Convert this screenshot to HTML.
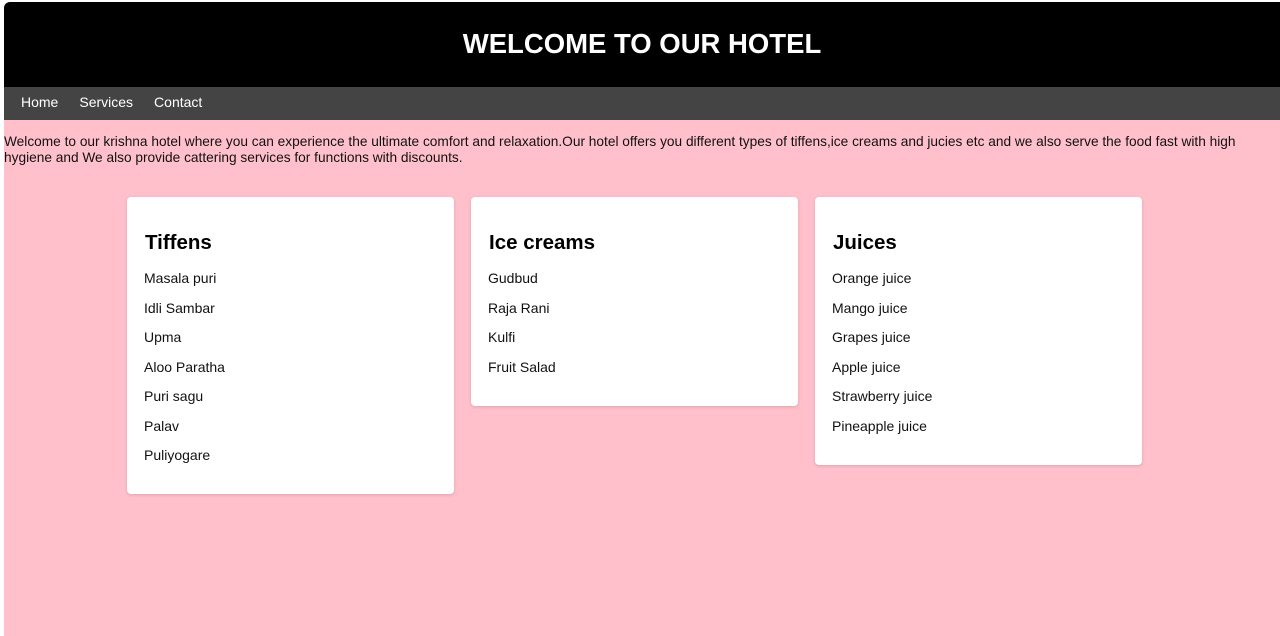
<!DOCTYPE html>
<html><head><style>
body{margin:0;background:#fff;font-family:"Liberation Sans",Arial,sans-serif;}
.wrap{position:absolute;left:4px;top:2px;right:0;height:634px;background:#ffc0cb;border-top-left-radius:6px;overflow:hidden}
.hd{background:#000;height:85px;color:#fff;text-align:center;font-weight:bold;font-size:27.5px;line-height:83px;}
.nav{background:#444;height:33px;line-height:31px;padding-left:17px}
.nav span{color:#fff;font-size:14px;margin-right:21px}
p.i{margin:14px 0 0 0;font-size:13.7px;line-height:16px;color:#111}
.card{position:absolute;top:195px;width:327px;background:#fff;border-radius:4px;box-shadow:0 1px 3px rgba(0,0,0,.15)}
.card h2{margin:34px 0 9px 18px;font-size:20.5px;line-height:24px}
.card div{margin-left:17px;font-size:14px;line-height:29.5px;color:#111}
</style></head><body>
<div class="wrap">
<div class="hd">WELCOME TO OUR HOTEL</div>
<div class="nav"><span>Home</span><span>Services</span><span>Contact</span></div>
<p class="i">Welcome to our krishna hotel where you can experience the ultimate comfort and relaxation.Our hotel offers you different types of tiffens,ice creams and jucies etc and we also serve the food fast with high hygiene and We also provide cattering services for functions with discounts.</p>
<div class="card" style="left:123px;height:297px"><h2>Tiffens</h2><div>Masala puri<br>Idli Sambar<br>Upma<br>Aloo Paratha<br>Puri sagu<br>Palav<br>Puliyogare</div></div>
<div class="card" style="left:467px;height:209px"><h2>Ice creams</h2><div>Gudbud<br>Raja Rani<br>Kulfi<br>Fruit Salad</div></div>
<div class="card" style="left:811px;height:268px"><h2>Juices</h2><div>Orange juice<br>Mango juice<br>Grapes juice<br>Apple juice<br>Strawberry juice<br>Pineapple juice</div></div>
</div>
</body></html>
